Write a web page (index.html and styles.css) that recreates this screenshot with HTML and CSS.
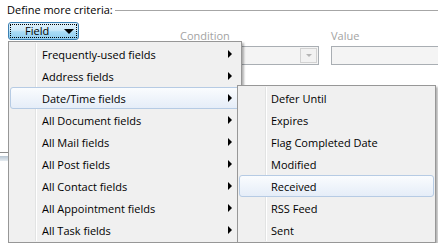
FILE: index.html
```html
<!DOCTYPE html>
<html>
<head>
<meta charset="utf-8">
<link rel="stylesheet" href="styles.css">
</head>
<body>
<div class="dialog">
  <div class="group-head">
    <span class="group-label">Define more criteria:</span>
    <span class="group-rule"></span>
  </div>
  <div class="criteria">
    <button class="field-btn"><span class="focus-rect"><span class="btn-text">Field</span><span class="btn-arrow"></span></span></button>
    <div class="col cond-col">
      <div class="lbl cond-lbl">Condition</div>
      <div class="combo"><span class="combo-btn"><span class="combo-arrow"></span></span></div>
    </div>
    <div class="col value-col">
      <div class="lbl">Value</div>
      <div class="textbox"></div>
    </div>
  </div>
  <div class="list-behind"></div>
</div>

<div class="menu main-menu">
  <div class="item">Frequently-used fields<span class="sub-arrow"></span></div>
  <div class="item">Address fields<span class="sub-arrow"></span></div>
  <div class="item hot">Date/Time fields<span class="sub-arrow"></span></div>
  <div class="item">All Document fields<span class="sub-arrow"></span></div>
  <div class="item">All Mail fields<span class="sub-arrow"></span></div>
  <div class="item">All Post fields<span class="sub-arrow"></span></div>
  <div class="item">All Contact fields<span class="sub-arrow"></span></div>
  <div class="item">All Appointment fields<span class="sub-arrow"></span></div>
  <div class="item">All Task fields<span class="sub-arrow"></span></div>
</div>

<div class="menu sub-menu">
  <div class="item">Defer Until</div>
  <div class="item">Expires</div>
  <div class="item">Flag Completed Date</div>
  <div class="item">Modified</div>
  <div class="item hot">Received</div>
  <div class="item">RSS Feed</div>
  <div class="item">Sent</div>
</div>
</body>
</html>
```

FILE: styles.css
```css
html, body {
  margin: 0;
  padding: 0;
}
body {
  width: 438px;
  height: 243px;
  overflow: hidden;
  background: #ffffff;
  font-family: "Open Sans", "Noto Sans", sans-serif;
  font-size: 11px;
  color: #000;
  position: relative;
}
.dialog {
  width: 438px;
}
.group-head {
  display: flex;
  align-items: center;
  padding: 3px 0 0 7px;
  height: 14px;
  line-height: 14px;
}
.group-label {
  white-space: nowrap;
}
.group-rule {
  flex: 1;
  margin-left: 2px;
  margin-top: 1px;
  border-top: 1px solid #a6a6a6;
}
.criteria {
  display: flex;
  align-items: flex-start;
  margin-top: 5px;
  padding-left: 8px;
}
.criteria > * {
  flex-shrink: 0;
}
.field-btn {
  box-sizing: border-box;
  width: 71px;
  height: 18px;
  margin: 0;
  padding: 1px;
  border: 1px solid #3c7fb1;
  border-radius: 3px;
  background: linear-gradient(#dff1fb 0%, #cce9f9 45%, #a9dcf6 55%, #8fcdef 100%);
  font: inherit;
  color: #000;
  display: flex;
}
.focus-rect {
  flex: 1;
  box-sizing: border-box;
  border: 1px dotted #000;
  display: flex;
  align-items: center;
  padding-left: 14px;
}
.btn-text {
  line-height: 12px;
}
.btn-arrow {
  margin-left: 15px;
  width: 0;
  height: 0;
  border-left: 5px solid transparent;
  border-right: 5px solid transparent;
  border-top: 5px solid #000;
}
.col {
  display: flex;
  flex-direction: column;
  padding-top: 7px;
  gap: 3px;
}
.lbl {
  color: #a3a3a3;
  line-height: 14px;
  height: 14px;
  white-space: nowrap;
}
.cond-col {
  margin-left: 101px;
  width: 139px;
}
.cond-lbl {
  width: 50px;
  overflow: hidden;
}
.value-col {
  margin-left: 12px;
  width: 120px;
}
.combo {
  box-sizing: border-box;
  height: 19px;
  border: 1px solid #a9aeb3;
  background: #f4f4f4;
  display: flex;
  justify-content: flex-end;
  padding: 1px;
}
.combo-btn {
  box-sizing: border-box;
  width: 17px;
  border: 1px solid #d2d2d2;
  background: #f2f2f2;
  display: flex;
  align-items: center;
  justify-content: center;
}
.combo-arrow {
  width: 0;
  height: 0;
  border-left: 3px solid transparent;
  border-right: 3px solid transparent;
  border-top: 3px solid #b5b5b5;
}
.textbox {
  box-sizing: border-box;
  height: 19px;
  border: 1px solid #a9aeb3;
  background: #f4f4f4;
}
.list-behind {
  margin-top: 87px;
  width: 240px;
  height: 8px;
  border-top: 1px solid #8c8c8c;
  background: linear-gradient(#ffffff 0, #ffffff 3px, #b8c6d3 3px, #e6ecf1 8px);
}
.menu {
  position: absolute;
  background: #f0f0f0;
  border: 1px solid #979797;
  padding: 1px;
  box-shadow: 2px 2px 2px rgba(0, 0, 0, 0.3);
}
.menu::before {
  content: "";
  position: absolute;
  left: 26px;
  top: 1px;
  bottom: 1px;
  width: 1px;
  background: #e2e3e3;
  border-right: 1px solid #ffffff;
}
.main-menu {
  left: 8px;
  top: 41px;
  width: 230px;
}
.sub-menu {
  left: 237px;
  top: 85px;
  width: 195px;
}
.sub-menu::before {
  left: 27px;
}
.item {
  position: relative;
  box-sizing: border-box;
  height: 22px;
  border: 1px solid transparent;
  border-radius: 3px;
  padding-left: 31px;
  display: flex;
  align-items: center;
  white-space: nowrap;
}
.item.hot {
  border-color: #b6cbe4;
  background: linear-gradient(#fafcfe, #e5edf8);
}
.sub-arrow {
  position: absolute;
  right: 7px;
  top: 6px;
  width: 0;
  height: 0;
  border-left: 4px solid #000;
  border-top: 4px solid transparent;
  border-bottom: 4px solid transparent;
}
```
